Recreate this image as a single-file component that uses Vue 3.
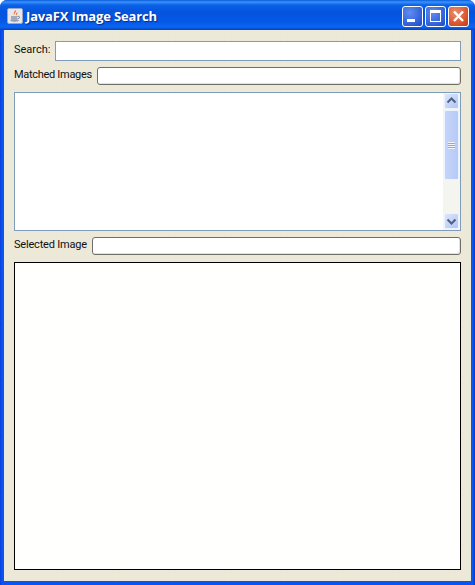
<template>
  <div class="window">
    <header class="titlebar">
      <div class="app-icon">
        <svg width="16" height="16" viewBox="0 0 16 16">
          <rect x="0.5" y="0.5" width="15" height="15" rx="1.5" fill="#e9e6ea" stroke="#9aa6c8" />
          <path d="M8.5 2 C10 4 6.5 5 7.5 7.5 C6 6 7 4.2 8.5 2Z M10 4 C9.5 5.5 8.5 6 9 7.5 C9.8 6.5 11 5.5 10 4Z" fill="#e2621b" />
          <path d="M4 8.5h6v1H4z M4 10.5h6.5v1H4z" fill="#5b6d8c" />
          <path d="M3 12.5h9c-1 1.2-7.5 1.2-9 0Z" fill="#47597c" />
          <path d="M10.5 8.5c2.5-.6 2.8 1.6.3 2.3" fill="none" stroke="#5b6d8c" stroke-width="0.9" />
        </svg>
      </div>
      <span class="title">JavaFX Image Search</span>
      <div class="controls">
        <button class="ctl" aria-label="Minimize">
          <svg width="19" height="19" viewBox="0 0 19 19"><rect x="4" y="12" width="8" height="3" fill="#fff" /></svg>
        </button>
        <button class="ctl" aria-label="Maximize">
          <svg width="19" height="19" viewBox="0 0 19 19"><path d="M4 3h11v12H4z M5 6v8h9V6z" fill="#fff" fill-rule="evenodd" /></svg>
        </button>
        <button class="ctl close" aria-label="Close">
          <svg width="19" height="19" viewBox="0 0 19 19"><path d="M5 4.5l9 9.5M14 4.5l-9 9.5" stroke="#fff" stroke-width="2.4" fill="none" /></svg>
        </button>
      </div>
    </header>

    <main class="body">
      <div class="row search-row">
        <label>Search:</label>
        <input class="field-blue" type="text" />
      </div>
      <div class="row matched-row">
        <label>Matched Images</label>
        <input class="field-round" type="text" />
      </div>

      <div class="listbox">
        <div class="list-content"></div>
        <div class="scrollbar">
          <div class="sb-btn">
            <svg width="13" height="14" viewBox="0 0 13 14"><path d="M2.5 8.5l4-4 4 4" fill="none" stroke="#4d6185" stroke-width="2" /></svg>
          </div>
          <div class="sb-thumb">
            <span class="grip"></span>
          </div>
          <div class="sb-track"></div>
          <div class="sb-btn">
            <svg width="13" height="14" viewBox="0 0 13 14"><path d="M2.5 5.5l4 4 4-4" fill="none" stroke="#4d6185" stroke-width="2" /></svg>
          </div>
        </div>
      </div>

      <div class="row selected-row">
        <label>Selected Image</label>
        <input class="field-round" type="text" />
      </div>

      <div class="image-box"></div>
    </main>
  </div>
</template>

<script setup>
</script>

<style>
html, body {
  margin: 0;
  background: #fff;
}
</style>

<style scoped>
.window {
  width: 475px;
  height: 585px;
  box-sizing: border-box;
  display: flex;
  flex-direction: column;
  border-radius: 7px 7px 0 0;
  background: linear-gradient(90deg, #0a3fd8, #0a55f2 2px, #0a55f2 473px, #0638c0);
  overflow: hidden;
  font-family: Roboto, sans-serif;
  font-size: 11px;
  color: #111;
}

.titlebar {
  height: 30px;
  flex: none;
  display: flex;
  align-items: center;
  padding: 2px 6px 0 7px;
  box-sizing: border-box;
  background: linear-gradient(#0a5cd8 0, #3a93ff 2px, #0a62e6 5px, #0453dc 12px, #0559e8 22px, #0a66f0 27px, #0442c4 30px);
}

.app-icon {
  width: 16px;
  height: 16px;
  display: flex;
}

.title {
  margin-left: 3px;
  font-family: "Open Sans", sans-serif;
  font-size: 13px;
  font-weight: 700;
  letter-spacing: -0.15px;
  color: #fff;
  text-shadow: 1px 1px 1px #0a2a8c;
}

.controls {
  margin-left: auto;
  display: flex;
  gap: 2px;
}

.ctl {
  width: 19px;
  height: 19px;
  padding: 0;
  display: flex;
  box-sizing: content-box;
  border: 1px solid #fff;
  border-radius: 3px;
  background: radial-gradient(circle at 35% 30%, #5f8df0, #2f5ed8 70%, #2048b8);
}

.ctl.close {
  background: radial-gradient(circle at 35% 30%, #ea8f70, #d9532c 65%, #b83a18);
}

.body {
  flex: 1;
  margin: 0 4px 4px;
  padding: 11px 10px;
  display: flex;
  flex-direction: column;
  background-color: #ece9d8;
  /* the reference is a dithered capture, faint dots on the panel */
  background-image: radial-gradient(#f2dfcf 0.6px, transparent 0.9px);
  background-size: 7px 7px;
}

.row {
  display: flex;
  align-items: center;
  gap: 5px;
}

.row label {
  white-space: nowrap;
  line-height: 14px;
  padding-bottom: 2px;
}

.matched-row label {
  letter-spacing: -0.3px;
}

.selected-row label {
  letter-spacing: -0.2px;
}

.row input {
  flex: 1;
  min-width: 0;
  box-sizing: border-box;
  background: #fff;
  outline: none;
  margin: 0;
}

.search-row input {
  height: 20px;
}

.field-blue {
  border: 1px solid #7f9db9;
}

.field-round {
  height: 18px;
  border: 1px solid #6f6f68;
  border-radius: 3px;
  box-shadow: inset -1px -1px 0 #e4e2d6;
}

.matched-row {
  margin-top: 6px;
}

.listbox {
  height: 139px;
  margin-top: 7px;
  box-sizing: border-box;
  display: flex;
  border: 1px solid #7f9db9;
  background: #fff;
}

.list-content {
  flex: 1;
}

.scrollbar {
  width: 17px;
  display: flex;
  flex-direction: column;
  padding: 0 0 1px;
  box-sizing: border-box;
  background: #f5f5f0;
}

.sb-btn {
  height: 14px;
  width: 13px;
  flex: none;
  margin-left: 1px;
  display: flex;
  border: 1px solid #eef4fe;
  box-sizing: content-box;
  border-radius: 2px;
  background: linear-gradient(135deg, #dbe5fb, #b2c6f5);
}

.sb-thumb {
  height: 68px;
  width: 13px;
  flex: none;
  margin: 1px 0 0 1px;
  display: flex;
  align-items: center;
  justify-content: center;
  border: 1px solid #eef4fe;
  border-radius: 2px;
  background: linear-gradient(90deg, #c5d4f9, #b6c9f8);
  box-sizing: content-box;
}

.grip {
  width: 7px;
  height: 7px;
  background: repeating-linear-gradient(#eef3fe 0 1px, #8fa8de 1px 2px);
}

.sb-track {
  flex: 1;
}

.selected-row {
  margin-top: 6px;
}

.image-box {
  height: 308px;
  margin-top: 7px;
  box-sizing: border-box;
  border: 1px solid #000;
  background: #fffffe;
}
</style>
